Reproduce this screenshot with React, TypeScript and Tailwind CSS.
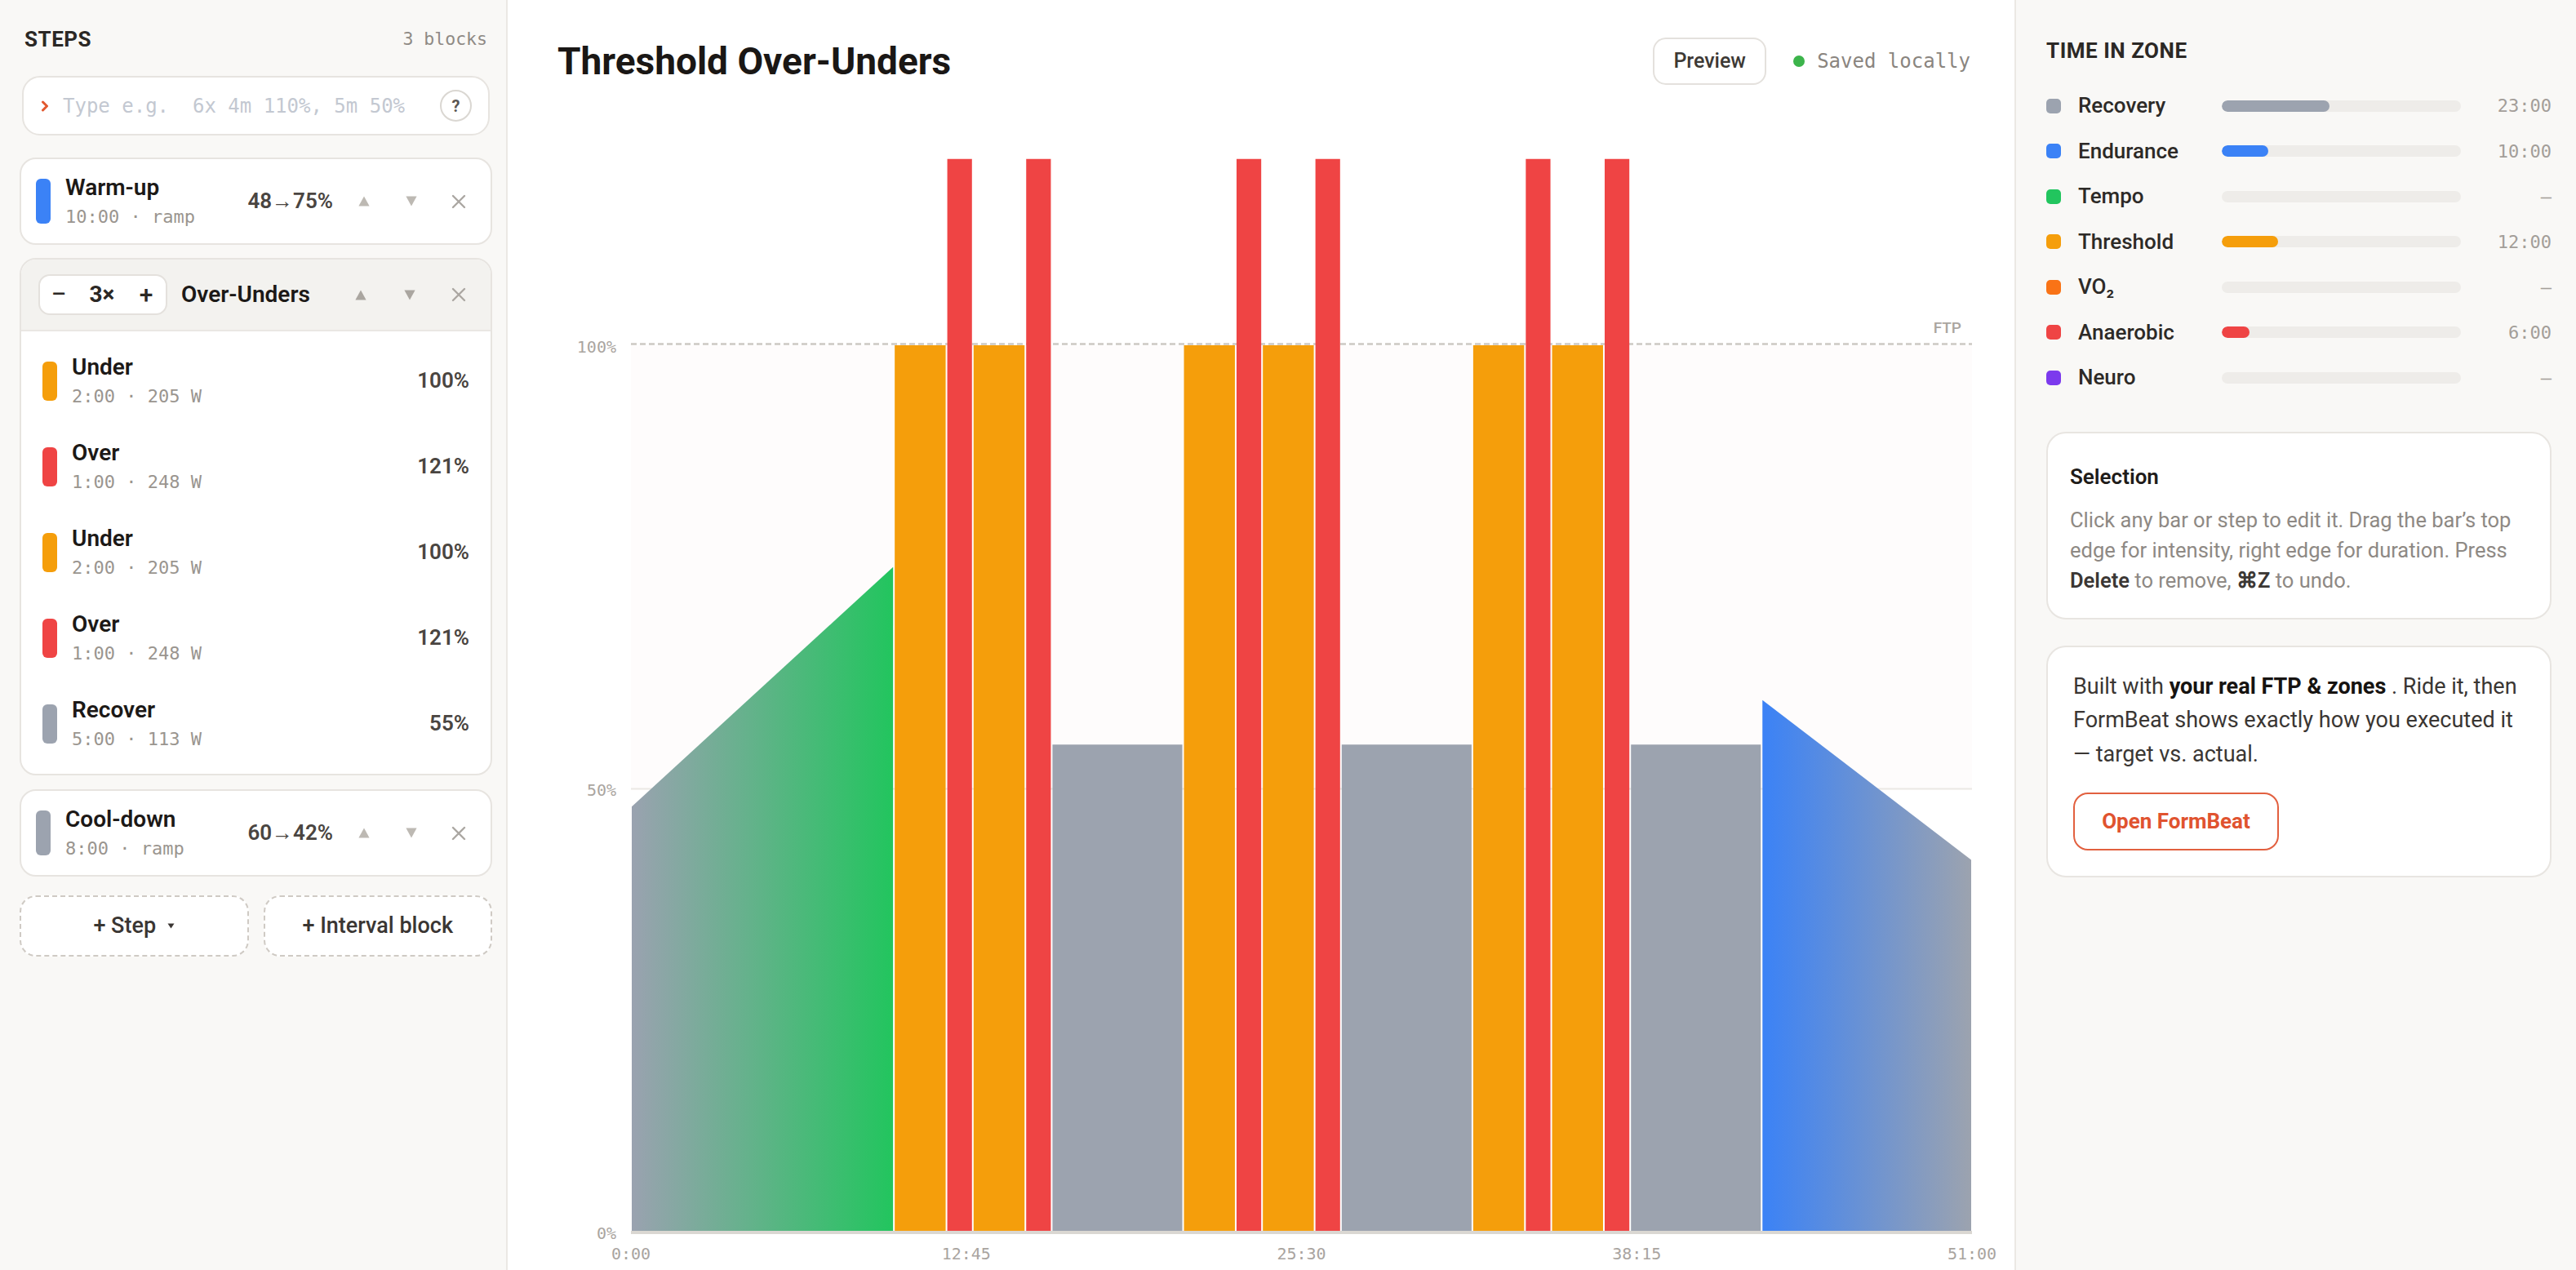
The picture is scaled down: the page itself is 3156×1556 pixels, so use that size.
import React from "react";

const MONO = "[font-family:'DejaVu_Sans_Mono',monospace]";

/* ---------- small drawn glyphs ---------- */

function TriUp({ color }: { color: string }) {
  return (
    <svg width="14" height="13" viewBox="0 0 14 13" aria-hidden>
      <path d="M7 0.5 L13.6 12.5 L0.4 12.5 Z" fill={color} />
    </svg>
  );
}

function TriDown({ color }: { color: string }) {
  return (
    <svg width="14" height="13" viewBox="0 0 14 13" aria-hidden>
      <path d="M0.4 0.5 L13.6 0.5 L7 12.5 Z" fill={color} />
    </svg>
  );
}

function Cross() {
  return (
    <svg width="18" height="18" viewBox="0 0 18 18" aria-hidden>
      <path d="M2 2 L16 16 M16 2 L2 16" stroke="#aba7a2" strokeWidth="2.4" strokeLinecap="round" />
    </svg>
  );
}

function Chevron() {
  return (
    <svg width="10" height="14" viewBox="0 0 10 14" aria-hidden>
      <path d="M2.5 2 L7.5 7 L2.5 12" stroke="#e2582f" strokeWidth="3" fill="none" strokeLinecap="round" strokeLinejoin="round" />
    </svg>
  );
}

function Caret() {
  return (
    <svg width="9" height="7" viewBox="0 0 9 7" aria-hidden>
      <path d="M0.5 0.5 L8.5 0.5 L4.5 6.5 Z" fill="#3a3633" />
    </svg>
  );
}

/* ---------- left panel ---------- */

function Controls({ wide, tri }: { wide: boolean; tri: string }) {
  const cell = wide ? "w-[60px] h-[44px] flex items-center justify-center" : "w-[58px] h-[44px] flex items-center justify-center";
  return (
    <div className="flex items-center">
      <div className={cell}>
        <TriUp color={tri} />
      </div>
      <div className={cell}>
        <TriDown color={tri} />
      </div>
      <div className={cell}>
        <Cross />
      </div>
    </div>
  );
}

function RampCard({ title, sub, range, bar }: { title: string; sub: string; range: string; bar: string }) {
  return (
    <div className="h-[107px] rounded-[20px] border-2 border-[#e7e4e0] bg-white flex items-center pl-[18px] pr-[10px]">
      <div className={`w-[18px] h-[55px] rounded-[6px] ${bar}`} />
      <div className="ml-[18px] flex-1 flex flex-col gap-[4px]">
        <div className="text-[28px] leading-[34px] font-semibold text-[#1c1917]">{title}</div>
        <div className={`${MONO} text-[22px] leading-[30px] text-[#9a958f]`}>{sub}</div>
      </div>
      <div className="mr-[9px] text-[26px] font-semibold text-[#4a4541]">{range}</div>
      <Controls wide={false} tri="#bdb9b3" />
    </div>
  );
}

const intervalRows = [
  { name: "Under", sub: "2:00 · 205 W", pct: "100%", bar: "bg-[#f59e0b]" },
  { name: "Over", sub: "1:00 · 248 W", pct: "121%", bar: "bg-[#ef4444]" },
  { name: "Under", sub: "2:00 · 205 W", pct: "100%", bar: "bg-[#f59e0b]" },
  { name: "Over", sub: "1:00 · 248 W", pct: "121%", bar: "bg-[#ef4444]" },
  { name: "Recover", sub: "5:00 · 113 W", pct: "55%", bar: "bg-[#9ca3af]" },
];

function IntervalBlock() {
  return (
    <div className="rounded-[20px] border-2 border-[#e7e4e0] bg-white overflow-hidden">
      <div className="h-[88px] bg-[#f3f2ef] border-b-2 border-[#eae7e3] flex items-center pl-[21px] pr-[9px]">
        <div className="w-[158px] h-[50px] rounded-[14px] border-2 border-[#e4e1dd] bg-white flex items-center text-[#2b2825]">
          <span className="w-[46px] text-center text-[28px] font-medium leading-none">–</span>
          <span className="w-[60px] text-center text-[28px] font-bold leading-none">3×</span>
          <span className="w-[48px] text-center text-[30px] font-medium leading-none">+</span>
        </div>
        <div className="ml-[17px] flex-1 text-[28px] font-semibold text-[#1c1917]">Over-Unders</div>
        <Controls wide={true} tri="#aaa6a0" />
      </div>
      <div className="pt-[8px] pb-[9px] pl-[26px] pr-[26px]">
        {intervalRows.map((r, i) => (
          <div key={i} className="h-[105px] flex items-center">
            <div className={`w-[18px] h-[48px] rounded-[6px] ${r.bar}`} />
            <div className="ml-[18px] flex-1 flex flex-col gap-[4px]">
              <div className="text-[28px] leading-[34px] font-semibold text-[#1c1917]">{r.name}</div>
              <div className={`${MONO} text-[22px] leading-[30px] text-[#9a958f]`}>{r.sub}</div>
            </div>
            <div className="text-[26px] font-semibold text-[#4a4541]">{r.pct}</div>
          </div>
        ))}
      </div>
    </div>
  );
}

function StepsPanel() {
  return (
    <aside className="w-[622px] shrink-0 h-full bg-[#f9f8f6] border-r-2 border-[#ebe8e4] pt-[28px] pl-[24px] pr-[17px]">
      <div className="h-[40px] flex items-center justify-between px-[6px]">
        <span className="text-[26px] font-bold tracking-[0.02em] text-[#2b2825]">STEPS</span>
        <span className={`${MONO} text-[21.5px] text-[#8f8a85]`}>3 blocks</span>
      </div>

      <div className="mt-[25px] mx-[3px] h-[73px] rounded-[22px] border-2 border-[#e7e4e0] bg-white flex items-center pl-[21px] pr-[20px]">
        <Chevron />
        <span className={`ml-[17px] flex-1 whitespace-pre ${MONO} text-[24px] text-[#c3c8d1]`}>Type e.g.  6x 4m 110%, 5m 50%</span>
        <span className="w-[39px] h-[39px] rounded-full border-2 border-[#dad7d2] flex items-center justify-center text-[20px] font-bold text-[#5b5652]">?</span>
      </div>

      <div className="mt-[27px]">
        <RampCard title="Warm-up" sub="10:00 · ramp" range="48→75%" bar="bg-[#3b82f6]" />
      </div>

      <div className="mt-[16px]">
        <IntervalBlock />
      </div>

      <div className="mt-[17px]">
        <RampCard title="Cool-down" sub="8:00 · ramp" range="60→42%" bar="bg-[#9ca3af]" />
      </div>

      <div className="mt-[23px] grid grid-cols-2 gap-[18px]">
        <button className="h-[75px] rounded-[20px] border-2 border-dashed border-[#cfcac4] bg-white flex items-center justify-center text-[27px] font-medium text-[#3a3633]">
          <span>+ Step</span>
          <span className="ml-[14px] flex items-center">
            <Caret />
          </span>
        </button>
        <button className="h-[75px] rounded-[20px] border-2 border-dashed border-[#cfcac4] bg-white flex items-center justify-center text-[27px] font-medium text-[#3a3633]">
          + Interval block
        </button>
      </div>
    </aside>
  );
}

/* ---------- workout chart ---------- */

type Seg = { start: number; dur: number; from: number; to: number; fill: string };

const X0 = 151;
const X1 = 1794;
const PLOT_W = X1 - X0;
const TOTAL_MIN = 51;
const FLOOR = 1378;
const xOf = (m: number) => X0 + (m / TOTAL_MIN) * PLOT_W;
const yOf = (p: number) => 1380 - p * 10.87;

function buildSegments(): Seg[] {
  const s: Seg[] = [{ start: 0, dur: 10, from: 48, to: 75, fill: "url(#warmGrad)" }];
  for (let i = 0; i < 3; i++) {
    const b = 10 + i * 11;
    s.push({ start: b, dur: 2, from: 100, to: 100, fill: "#f59e0b" });
    s.push({ start: b + 2, dur: 1, from: 121, to: 121, fill: "#ef4444" });
    s.push({ start: b + 3, dur: 2, from: 100, to: 100, fill: "#f59e0b" });
    s.push({ start: b + 5, dur: 1, from: 121, to: 121, fill: "#ef4444" });
    s.push({ start: b + 6, dur: 5, from: 55, to: 55, fill: "#9ca3af" });
  }
  s.push({ start: 43, dur: 8, from: 60, to: 42, fill: "url(#coolGrad)" });
  return s;
}

const ticks = ["0:00", "12:45", "25:30", "38:15", "51:00"];
const monoFamily = "DejaVu Sans Mono, monospace";

function WorkoutChart() {
  const segs = buildSegments();
  return (
    <svg width={1846} height={1426} viewBox="0 0 1846 1426" className="block mt-[26px]">
      <defs>
        <linearGradient id="warmGrad" x1="0" y1="0" x2="1" y2="0">
          <stop offset="0" stopColor="#9aa2b0" />
          <stop offset="1" stopColor="#22c55e" />
        </linearGradient>
        <linearGradient id="coolGrad" x1="0" y1="0" x2="1" y2="0">
          <stop offset="0" stopColor="#3b82f6" />
          <stop offset="1" stopColor="#9ca3af" />
        </linearGradient>
      </defs>

      {/* threshold band, 50–100% of FTP */}
      <rect x={X0} y={yOf(100)} width={PLOT_W} height={yOf(50) - yOf(100)} fill="#fefcfc" />
      <line x1={X0} x2={X1} y1={yOf(50)} y2={yOf(50)} stroke="#ebe8e4" strokeWidth={2} />
      <line x1={X0} x2={X1} y1={yOf(100) - 1.5} y2={yOf(100) - 1.5} stroke="#cdc9c3" strokeWidth={2.5} strokeDasharray="7 4" />

      {segs.map((s, i) => {
        const l = xOf(s.start) + 1;
        const r = xOf(s.start + s.dur) - 1;
        return (
          <polygon
            key={i}
            points={`${l},${yOf(s.from)} ${r},${yOf(s.to)} ${r},${FLOOR} ${l},${FLOOR}`}
            fill={s.fill}
          />
        );
      })}

      <rect x={X0} y={FLOOR} width={PLOT_W} height={4} fill="#dad7d2" />

      <text x={1781} y={278} textAnchor="end" fontFamily="Roboto, sans-serif" fontSize={19} fontWeight={500} fill="#aaa5a0">
        FTP
      </text>

      <g fontFamily={monoFamily} fontSize={20} fill="#aaa5a0" textAnchor="end">
        <text x={133} y={302}>100%</text>
        <text x={133} y={845}>50%</text>
        <text x={133} y={1388}>0%</text>
      </g>

      <g fontFamily={monoFamily} fontSize={20} fill="#a9a49f" textAnchor="middle">
        {ticks.map((t, i) => (
          <text key={t} x={X0 + (PLOT_W * i) / 4} y={1413}>
            {t}
          </text>
        ))}
      </g>
    </svg>
  );
}

function Editor() {
  return (
    <main className="flex-1 h-full flex flex-col bg-white">
      <div className="mt-[46px] h-[58px] flex items-center pl-[61px] pr-[54px]">
        <h1 className="text-[46px] leading-none font-bold text-[#1a1715]">Threshold Over-Unders</h1>
        <div className="ml-auto flex items-center">
          <button className="h-[58px] w-[139px] rounded-[16px] border-2 border-[#e4e1dd] bg-white text-[25px] font-medium text-[#3d3935]">
            Preview
          </button>
          <span className="ml-[33px] w-[14px] h-[14px] rounded-full bg-[#3cb44b]" />
          <span className={`ml-[15px] ${MONO} text-[24px] text-[#8a857f]`}>Saved locally</span>
        </div>
      </div>
      <WorkoutChart />
    </main>
  );
}

/* ---------- right panel ---------- */

const zones = [
  { name: "Recovery", dot: "bg-[#9ca3af]", fill: "bg-[#9ca3af]", min: 23, label: "23:00" },
  { name: "Endurance", dot: "bg-[#3b82f6]", fill: "bg-[#3b82f6]", min: 10, label: "10:00" },
  { name: "Tempo", dot: "bg-[#22c55e]", fill: "bg-[#22c55e]", min: 0, label: "–" },
  { name: "Threshold", dot: "bg-[#f59e0b]", fill: "bg-[#f59e0b]", min: 12, label: "12:00" },
  { name: "VO₂", dot: "bg-[#f97316]", fill: "bg-[#f97316]", min: 0, label: "–" },
  { name: "Anaerobic", dot: "bg-[#ef4444]", fill: "bg-[#ef4444]", min: 6, label: "6:00" },
  { name: "Neuro", dot: "bg-[#7c3aed]", fill: "bg-[#7c3aed]", min: 0, label: "–" },
];

function ZonesPanel() {
  return (
    <aside className="w-[688px] shrink-0 h-full bg-[#f9f8f6] border-l-2 border-[#ebe8e4] pt-[44px] pl-[37px] pr-[30px]">
      <div className="h-[37px] flex items-center text-[26px] font-bold tracking-[0.02em] text-[#2b2825]">TIME IN ZONE</div>

      <div className="mt-[21px]">
        {zones.map((z) => (
          <div key={z.name} className="h-[55.5px] flex items-center">
            <span className={`w-[18px] h-[18px] rounded-[5px] ${z.dot}`} />
            <span className="ml-[21px] w-[176px] text-[26px] font-medium text-[#2d2a27]">{z.name}</span>
            <div className="w-[293px] h-[14px] rounded-full bg-[#eeece9] overflow-hidden">
              {z.min > 0 && <div className={`h-full rounded-full ${z.fill}`} style={{ width: `${(z.min / 51) * 100}%` }} />}
            </div>
            <span className={`flex-1 text-right ${MONO} text-[22px] text-[#a39e99]`}>{z.label}</span>
          </div>
        ))}
      </div>

      <div className="mt-[38px] rounded-[24px] border-2 border-[#e8e5e1] bg-white pt-[35px] pb-[27px] px-[27px]">
        <div className="text-[26px] leading-[36px] font-semibold text-[#1f1c1a]">Selection</div>
        <p className="mt-[17.5px] text-[25.5px] leading-[37px] text-[#8e8984]">
          Click any bar or step to edit it. Drag the bar’s top edge for intensity, right edge for duration. Press{" "}
          <b className="font-semibold text-[#3b3734]">Delete</b> to remove, <b className="font-semibold text-[#3b3734]">⌘Z</b> to undo.
        </p>
      </div>

      <div className="mt-[31.5px] rounded-[24px] border-2 border-[#e8e5e1] bg-white pt-[28px] pb-[31px] pl-[31px] pr-[27px]">
        <p className="text-[27px] leading-[41.5px] text-[#3a3633]">
          Built with <b className="font-bold text-[#161311]">your real FTP &amp; zones</b> . Ride it, then FormBeat shows exactly how you executed it — target vs. actual.
        </p>
        <button className="mt-[26px] h-[71px] w-[252px] rounded-[18px] border-[2.5px] border-[#e2603f] bg-white text-[26px] font-bold text-[#e0532f]">
          Open FormBeat
        </button>
      </div>
    </aside>
  );
}

export default function App() {
  return (
    <div className="flex w-[3156px] h-[1556px] overflow-hidden bg-white [font-family:'Roboto',sans-serif] text-[#1c1917]">
      <StepsPanel />
      <Editor />
      <ZonesPanel />
    </div>
  );
}
